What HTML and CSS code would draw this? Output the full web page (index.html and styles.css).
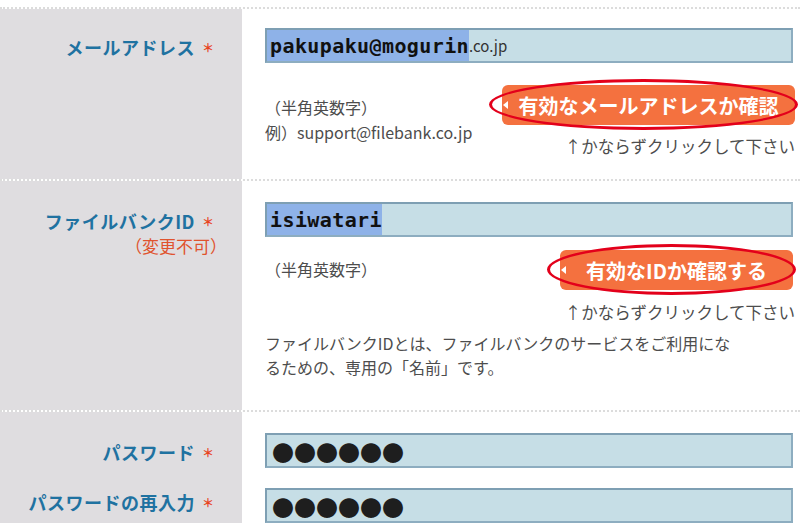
FILE: index.html
```html
<!DOCTYPE html>
<html lang="ja">

<head>
    <meta charset="UTF-8">
    <title>ユーザー登録</title>
    <link rel="stylesheet" href="styles.css">
</head>

<body>
    <div class="form">
        <!-- メールアドレス -->
        <div class="row row-mail">
            <div class="label-cell">
                <span class="label">メールアドレス</span><span class="req">＊</span>
            </div>
            <div class="field-cell">
                <div class="input"><span class="sel">pakupaku@mogurin</span><span class="rest">.co.jp</span></div>
                <div class="check">
                    <p class="notes">（半角英数字）<br>例）support@filebank.co.jp</p>
                    <div class="action">
                        <button class="btn btn-mail">有効なメールアドレスか確認</button>
                        <p class="caption">↑かならずクリックして下さい</p>
                    </div>
                </div>
            </div>
        </div>

        <!-- ファイルバンクID -->
        <div class="row row-id">
            <div class="label-cell">
                <span class="label">ファイルバンクID</span><span class="req">＊</span>
                <p class="sublabel">（変更不可）</p>
            </div>
            <div class="field-cell">
                <div class="input"><span class="sel">isiwatari</span></div>
                <div class="check">
                    <p class="notes notes-id">（半角英数字）</p>
                    <div class="action">
                        <button class="btn btn-id">有効なIDか確認する</button>
                        <p class="caption">↑かならずクリックして下さい</p>
                    </div>
                </div>
                <p class="desc">ファイルバンクIDとは、ファイルバンクのサービスをご利用にな<br>るための、専用の「名前」です。</p>
            </div>
        </div>

        <!-- パスワード -->
        <div class="row row-pass">
            <div class="label-cell">
                <span class="label">パスワード</span><span class="req">＊</span>
            </div>
            <div class="field-cell">
                <div class="input input-pass">●●●●●●</div>
            </div>
            <div class="label-cell">
                <span class="label">パスワードの再入力</span><span class="req">＊</span>
            </div>
            <div class="field-cell">
                <div class="input input-pass">●●●●●●</div>
            </div>
        </div>
    </div>
</body>

</html>
```

FILE: styles.css
```css
* {
    margin: 0;
    padding: 0;
    box-sizing: border-box;
}

body {
    background-color: #fff;
    font-family: "Noto Sans CJK JP", sans-serif;
    color: #4d4d4d;
    overflow: hidden;
}

.form {
    padding-top: 7px;
}

.row {
    display: grid;
    grid-template-columns: 242px 1fr;
    border-top: 2px dotted #dcdcdc;
    background: linear-gradient(to right, #dfdde0 242px, #fff 242px);
    background-clip: padding-box;
}

.row-mail {
    padding: 19px 0 23px;
}

.row-id {
    padding: 21px 0 31px;
}

.row-pass {
    padding: 21px 0 0;
    row-gap: 17px;
}

/* left column */
.label-cell {
    text-align: right;
    padding: 2px 28px 0 0;
    line-height: 35px;
}

.row-pass .label-cell:nth-child(3) {
    padding-top: 0;
    margin-top: -3px;
}

.label {
    font-size: 18px;
    font-weight: 700;
    color: #1f72a1;
    letter-spacing: 0.5px;
}

.req {
    font-size: 12px;
    font-weight: 700;
    color: #e8441e;
    margin-left: 7px;
    vertical-align: 2px;
}

.sublabel {
    font-size: 17px;
    line-height: 16px;
    color: #e0532e;
    margin-right: -13px;
    margin-top: -2px;
}

/* right column */
.field-cell {
    padding: 0 5px 0 23px;
}

.input {
    display: flex;
    align-items: stretch;
    height: 35px;
    margin-right: 2px;
    background-color: #c6dee6;
    border: 2px solid #8dadc0;
    border-top-color: #7e9fb3;
    border-left-color: #7e9fb3;
}

.sel {
    display: flex;
    align-items: center;
    padding: 0 0 0 3px;
    background-color: #8eb2e8;
    font-family: "DejaVu Sans Mono", monospace;
    font-size: 20px;
    font-weight: 700;
    letter-spacing: 0.4px;
    color: #111;
}

.rest {
    display: flex;
    align-items: center;
    font-size: 15px;
    color: #333;
}

.input-pass {
    align-items: center;
    padding-left: 5px;
    font-size: 22px;
    color: #1e1e1e;
}

.check {
    display: flex;
    justify-content: space-between;
    align-items: flex-start;
}

.notes {
    font-size: 16px;
    line-height: 25px;
    padding-top: 32px;
}

.notes-id {
    padding-top: 20px;
}

.action {
    display: flex;
    flex-direction: column;
    align-items: flex-end;
}

.row-mail .action {
    margin-top: 22px;
}

.row-id .action {
    margin-top: 13px;
}

.btn {
    position: relative;
    height: 40px;
    border: none;
    border-radius: 6px;
    background-color: #f4713f;
    color: #fff;
    font-family: "Noto Sans CJK JP", sans-serif;
    font-size: 20px;
    font-weight: 700;
    cursor: pointer;
}

.btn-mail {
    width: 293px;
}

.btn-id {
    width: 233px;
    margin-right: 2px;
}

/* small arrow notch on the left of the button */
.btn:before {
    content: '';
    position: absolute;
    left: 1px;
    top: 50%;
    margin-top: -4px;
    border-style: solid;
    border-width: 4px 5px 4px 0;
    border-color: transparent #fff transparent transparent;
}

/* red circle drawn around the button */
.btn:after {
    content: '';
    position: absolute;
    top: -6px;
    bottom: -5px;
    left: -13px;
    right: -3px;
    border: 3px solid #e3001b;
    border-radius: 50%;
}

.caption {
    font-size: 16.5px;
    line-height: 20px;
    color: #4d4d4d;
    margin-top: 11px;
}

.row-id .caption {
    margin-top: 12px;
}

.desc {
    font-size: 16px;
    line-height: 24px;
    margin-top: 9px;
}
```
